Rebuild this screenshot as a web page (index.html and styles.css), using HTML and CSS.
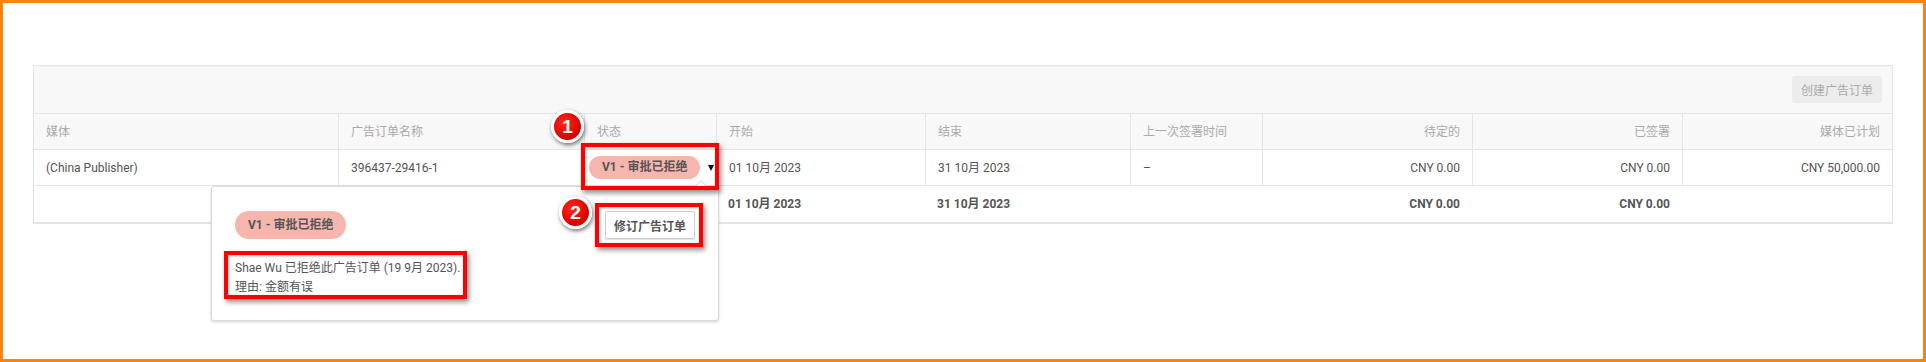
FILE: index.html
```html
<!DOCTYPE html>
<html lang="zh-CN">
<head>
	<meta charset="UTF-8">
	<meta name="viewport" content="width=device-width, initial-scale=1.0">
	<title>广告订单</title>
	<link rel="stylesheet" href="styles.css">
</head>
<body>
	<div class="frame">
		<div class="orders">
			<div class="toolbar">
				<button class="btn-create" disabled>创建广告订单</button>
			</div>
			<table class="order-table">
				<colgroup>
					<col style="width: 304px">
					<col style="width: 246px">
					<col style="width: 132px">
					<col style="width: 209px">
					<col style="width: 205px">
					<col style="width: 132px">
					<col style="width: 210px">
					<col style="width: 210px">
					<col style="width: 210px">
				</colgroup>
				<thead>
					<tr>
						<th>媒体</th>
						<th>广告订单名称</th>
						<th>状态</th>
						<th>开始</th>
						<th>结束</th>
						<th>上一次签署时间</th>
						<th class="num">待定的</th>
						<th class="num">已签署</th>
						<th class="num">媒体已计划</th>
					</tr>
				</thead>
				<tbody>
					<tr>
						<td>(China Publisher)</td>
						<td>396437-29416-1</td>
						<td class="status">
							<div class="status-cell">
								<span class="pill">V1 - 审批已拒绝</span>
								<span class="caret"></span>
							</div>
						</td>
						<td>01 10月 2023</td>
						<td>31 10月 2023</td>
						<td>–</td>
						<td class="num">CNY 0.00</td>
						<td class="num">CNY 0.00</td>
						<td class="num">CNY 50,000.00</td>
					</tr>
					<tr class="total">
						<td></td>
						<td></td>
						<td></td>
						<td>01 10月 2023</td>
						<td>31 10月 2023</td>
						<td></td>
						<td class="num">CNY 0.00</td>
						<td class="num">CNY 0.00</td>
						<td></td>
					</tr>
				</tbody>
			</table>
		</div>

		<div class="popover">
			<div class="popover-head">
				<span class="pill pill-lg">V1 - 审批已拒绝</span>
				<button class="btn-revise">修订广告订单</button>
			</div>
			<p class="popover-text">Shae Wu 已拒绝此广告订单 (19 9月 2023).<br>理由: 金额有误</p>
		</div>

		<!-- annotations -->
		<div class="mark mark-status"></div>
		<div class="mark mark-revise"></div>
		<div class="mark mark-reason"></div>
		<span class="step step-1">1</span>
		<span class="step step-2">2</span>
	</div>
</body>
</html>
```

FILE: styles.css
```css
* {
	box-sizing: border-box;
}
body {
	margin: 0;
	font-family: Roboto, "Noto Sans CJK SC", sans-serif;
	font-size: 12px;
	color: #555;
}
.frame {
	position: relative;
	height: 362px;
	border: 3px solid #f7840c;
	background: #fff;
	padding: 62px 30px 0 30px;
}
.orders {
	border: 1px solid #e4e4e4;
	background: #fff;
}
.toolbar {
	height: 48px;
	display: flex;
	justify-content: flex-end;
	align-items: center;
	padding-right: 10px;
	background: #f8f8f8;
	border-bottom: 1px solid #e4e4e4;
}
.btn-create {
	width: 90px;
	height: 27px;
	border: none;
	border-radius: 3px;
	background: #ececec;
	color: #aaa;
	font: inherit;
	padding: 0;
}
.order-table {
	width: 100%;
	table-layout: fixed;
	border-collapse: separate;
	border-spacing: 0;
}
.order-table th,
.order-table td {
	height: 36px;
	padding: 0 12px;
	text-align: left;
	white-space: nowrap;
	border-bottom: 1px solid #e4e4e4;
	border-left: 1px solid #e4e4e4;
	line-height: 16px;
}
.order-table th:first-child,
.order-table td:first-child {
	border-left: none;
}
.order-table th {
	font-weight: normal;
	color: #aaa;
	background: #f8f8f8;
}
.order-table .num {
	text-align: right;
}
.order-table .total td {
	height: 37px;
	border-left: none;
	font-weight: bold;
}
.order-table td.status {
	padding: 0 2px 0 4px;
}
.status-cell {
	display: flex;
	align-items: center;
	justify-content: space-between;
}
.pill {
	display: inline-block;
	height: 23px;
	line-height: 23px;
	padding: 0 13px;
	border-radius: 12px;
	background: #f7b6ad;
	font-weight: bold;
	color: #555;
}
.pill-lg {
	height: 28px;
	line-height: 28px;
	border-radius: 14px;
}
.caret {
	width: 0;
	height: 0;
	border-left: 3px solid transparent;
	border-right: 3px solid transparent;
	border-top: 6px solid #111;
	margin-top: 1px;
}
.popover {
	position: absolute;
	left: 208px;
	top: 183px;
	width: 508px;
	padding: 24px 23px 23px;
	background: #fff;
	border: 1px solid #dcdcdc;
	border-radius: 3px;
	box-shadow: 0 1px 3px rgba(0, 0, 0, 0.18);
}
.popover::before {
	content: "";
	position: absolute;
	top: -5px;
	right: 12px;
	width: 9px;
	height: 9px;
	background: #fff;
	border-top: 1px solid #dcdcdc;
	border-left: 1px solid #dcdcdc;
	transform: rotate(45deg);
}
.popover-head {
	display: flex;
	justify-content: space-between;
	align-items: center;
}
.btn-revise {
	width: 90px;
	height: 28px;
	padding: 0;
	background: #fff;
	border: 1px solid #cfcfcf;
	border-radius: 2px;
	box-shadow: 0 1px 1px rgba(0, 0, 0, 0.12);
	font: inherit;
	font-weight: bold;
	color: #555;
}
.popover-text {
	margin: 20px 0 0;
	line-height: 19px;
}
.mark {
	position: absolute;
	border: 4px solid #ff0000;
	box-shadow: 2px 3px 5px rgba(0, 0, 0, 0.45), inset 1px 1px 3px rgba(0, 0, 0, 0.25);
}
.mark-status {
	left: 578px;
	top: 140px;
	width: 138px;
	height: 47px;
}
.mark-revise {
	left: 592px;
	top: 200px;
	width: 108px;
	height: 44px;
}
.mark-reason {
	left: 221px;
	top: 248px;
	width: 243px;
	height: 48px;
}
.step {
	position: absolute;
	width: 33px;
	height: 33px;
	border: 3px solid #fff;
	border-radius: 50%;
	background: radial-gradient(circle at 40% 35%, #ff2a1a, #d60000 70%);
	box-shadow: 1px 2px 4px rgba(0, 0, 0, 0.55);
	color: #fff;
	font-family: "Liberation Sans", Arial, sans-serif;
	font-weight: bold;
	font-size: 19px;
	line-height: 27px;
	text-align: center;
}
.step-1 {
	left: 548px;
	top: 107px;
}
.step-2 {
	left: 556px;
	top: 193px;
}
```
